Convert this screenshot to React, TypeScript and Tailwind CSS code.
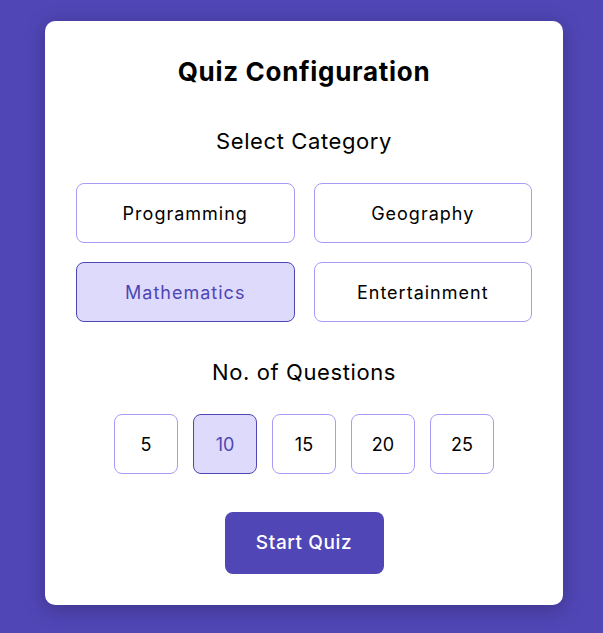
import React, { useState } from "react";

export default function App() {
  const [cat, setCat] = useState("Mathematics");
  const [num, setNum] = useState(10);
  const cats = ["Programming", "Geography", "Mathematics", "Entertainment"];
  const nums = [5, 10, 15, 20, 25];
  return (
    <div
      className="min-h-[633px] w-full bg-[#5046b6] flex justify-center pt-[21px] pl-[5px]"
      style={{ fontFamily: "Inter, 'Open Sans', sans-serif" }}
    >
      <div className="w-[518px] h-[584px] bg-white rounded-[10px] shadow-[0_4px_20px_rgba(0,0,0,0.25)] px-[31px] pt-[33px] flex flex-col items-center">
        <h1 className="text-[26px] leading-[36px] font-bold text-black tracking-[0.7px]">Quiz Configuration</h1>
        <h2 className="mt-[36px] text-[22px] leading-[30px] text-black tracking-[0.6px]">Select Category</h2>
        <div className="mt-[27px] grid grid-cols-2 gap-[19px] w-full">
          {cats.map((c) => (
            <button
              key={c}
              onClick={() => setCat(c)}
              className={
                c === cat
                  ? "h-[60px] rounded-[8px] border border-[#4f46b4] bg-[#dedafb] text-[#4f46b4] text-[18px] tracking-[1px]"
                  : "h-[60px] rounded-[8px] border border-[#a59cf7] bg-white text-black text-[18px] tracking-[1px]"
              }
            >
              {c}
            </button>
          ))}
        </div>
        <h2 className="mt-[35px] text-[22px] leading-[30px] text-black tracking-[0.6px]">No. of Questions</h2>
        <div className="mt-[27px] flex gap-[15px]">
          {nums.map((n) => (
            <button
              key={n}
              onClick={() => setNum(n)}
              className={
                n === num
                  ? "w-[64px] h-[60px] rounded-[8px] border border-[#4f46b4] bg-[#dedafb] text-[#4f46b4] text-[18px]"
                  : "w-[64px] h-[60px] rounded-[8px] border border-[#a59cf7] bg-white text-black text-[18px]"
              }
            >
              {n}
            </button>
          ))}
        </div>
        <button className="mt-[38px] w-[159px] h-[62px] rounded-[8px] bg-[#5046b6] text-white text-[19px] font-medium tracking-[0.6px]">
          Start Quiz
        </button>
      </div>
    </div>
  );
}
